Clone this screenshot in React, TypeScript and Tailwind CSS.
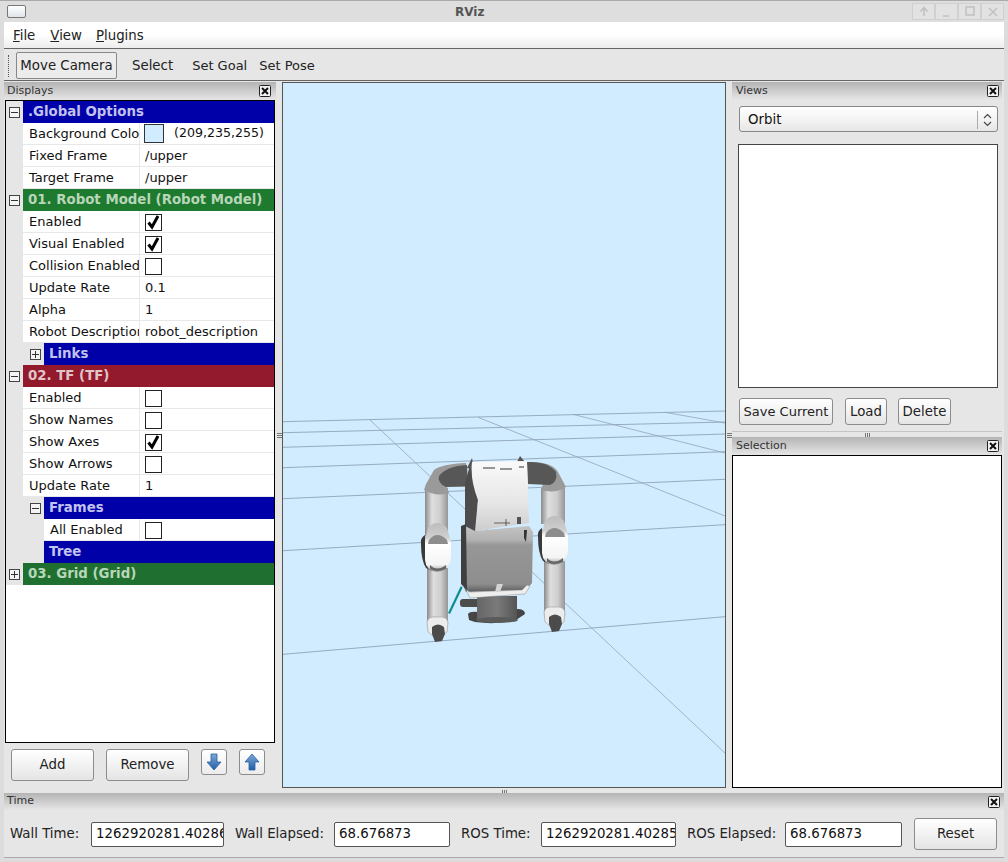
import React from "react";

function Close() {
  return (
    <svg width="12" height="12" viewBox="0 0 12 12" className="shrink-0">
      <rect x="0.5" y="0.5" width="11" height="11" rx="1" fill="#f2f2f2" stroke="#222" />
      <path d="M3 3 L9 9 M9 3 L3 9" stroke="#111" strokeWidth="2" />
    </svg>
  );
}

function Title({ text, className = "" }: { text: string; className?: string }) {
  return (
    <div className={`flex items-center justify-between text-[11px] text-[#333] bg-gradient-to-b from-[#b4b4b4] to-[#e6e6e6] ${className}`}>
      <span>{text}</span>
      <Close />
    </div>
  );
}

function Expander({ plus }: { plus?: boolean }) {
  return (
    <svg width="11" height="11" viewBox="0 0 11 11" className="shrink-0">
      <rect x="0.5" y="0.5" width="10" height="10" fill="#f4f4f4" stroke="#444" />
      <path d={plus ? "M2 5.5 H9 M5.5 2 V9" : "M2 5.5 H9"} stroke="#333" />
    </svg>
  );
}

function Check({ on }: { on?: boolean }) {
  return (
    <svg width="17" height="17" viewBox="0 0 17 17" className="ml-[5px] mt-[2px] shrink-0">
      <rect x="0.5" y="0.5" width="16" height="16" fill="#fff" stroke="#222" />
      {on && <path d="M3.5 8.5 L7 13 L13 2" fill="none" stroke="#000" strokeWidth="3" />}
    </svg>
  );
}

function Header({ text, bg, color, exp, level = 1 }: { text: string; bg: string; color: string; exp?: "plus" | "minus"; level?: number }) {
  return (
    <div className="flex h-[22px] bg-white">
      <div className={`flex items-center justify-end bg-[#e6e6e6] ${level === 1 ? "w-[17px] pr-[3px]" : "w-[38px] pr-[3px]"}`}>
        {exp && <Expander plus={exp === "plus"} />}
      </div>
      <div className={`flex flex-1 items-center whitespace-nowrap pl-[5px] text-[13.33px] font-bold ${bg} ${color}`}>{text}</div>
    </div>
  );
}

function Row({ label, value, check, level = 1, swatch }: { label: string; value?: string; check?: "on" | "off"; level?: number; swatch?: boolean }) {
  return (
    <div className="flex h-[22px]">
      <div className={`bg-[#e6e6e6] ${level === 1 ? "w-[17px]" : "w-[38px]"}`} />
      <div className={`flex h-[22px] items-center overflow-hidden whitespace-nowrap border-b border-r border-[#e8e8e8] bg-white pl-[6px] text-[13px] text-[#111] ${level === 1 ? "w-[117px]" : "w-[96px]"}`}>
        {label}
      </div>
      <div className="flex h-[22px] flex-1 items-center border-b border-[#e8e8e8] bg-white text-[13px] text-[#111]">
        {check && <Check on={check === "on"} />}
        {swatch && <div className="ml-[4px] mr-[10px] h-[19px] w-[20px] border border-[#333] bg-[#d1ebff]" />}
        {value && <span className={swatch ? "text-[12.6px]" : "pl-[5px]"}>{value}</span>}
      </div>
    </div>
  );
}

function Btn({ text, className = "" }: { text: string; className?: string }) {
  return (
    <div className={`flex shrink-0 items-center justify-center whitespace-nowrap rounded-[3px] border border-[#8c8c8c] bg-gradient-to-b from-white via-[#f2f2f2] to-[#e4e4e4] text-[13.33px] text-[#222] ${className}`}>
      {text}
    </div>
  );
}

function ArrowBtn({ up }: { up?: boolean }) {
  return (
    <div className="flex h-[26px] w-[26px] items-center justify-center rounded-[3px] border border-[#8c8c8c] bg-gradient-to-b from-white to-[#ececec]">
      <svg width="16" height="18" viewBox="0 0 16 18">
        <defs>
          <linearGradient id={up ? "au" : "ad"} x1="0" y1="0" x2="0" y2="1">
            <stop offset="0" stopColor="#7fa8d8" />
            <stop offset="1" stopColor="#1f5fa8" />
          </linearGradient>
        </defs>
        <path
          d={up ? "M8 1 L15 9 L11 9 L11 17 L5 17 L5 9 L1 9 Z" : "M8 17 L15 9 L11 9 L11 1 L5 1 L5 9 L1 9 Z"}
          fill={`url(#${up ? "au" : "ad"})`}
          stroke="#2c5f9e"
          strokeWidth="0.8"
        />
      </svg>
    </div>
  );
}

function Field({ value, className = "" }: { value: string; className?: string }) {
  return (
    <div className={`flex h-[25px] shrink-0 items-center overflow-hidden whitespace-nowrap rounded-[2px] border border-[#555] bg-white pl-[4px] text-[13.33px] text-[#111] ${className}`}>
      {value}
    </div>
  );
}

function Scene() {
  const horizontals = [
    [283, 421.7, 725, 411],
    [283, 432.7, 725, 422],
    [283, 447.3, 725, 434],
    [283, 467.7, 725, 451.7],
    [283, 498.7, 725, 479.3],
    [283, 550.7, 725, 524.7],
    [283, 654.3, 725, 616.7],
  ];
  const diagonals = [
    [370, 420, 725, 753],
    [478, 417.3, 725, 516],
    [573, 414.3, 725, 453],
    [665, 412.3, 725, 423],
  ];
  const lower = (dx: number, dy: number, gy: number, k: string) => (
    <g key={k}>
      <g transform={`translate(${dx} ${dy})`}>
        <rect x="427" y="568" width="21" height="54" fill="url(#cyl)" />
        <path d="M421 544 Q420 538 425 535 L428 562 L432 571 L426 568 Q421 560 421 544 Z" fill="#3a3a3a" />
        <path d="M425 540 L428 528 Q437 518 447 528 L451 542 L451 558 Q449 571 437 572 Q426 571 425 560 Z" fill="url(#elbow)" />
        <path d="M429 540 Q437 530 447 540 L448 544 L428 544 Z" fill="#8d8d8d" />
        <path d="M430 565 Q437 572 446 565 L446 569 Q437 573 430 569 Z" fill="#666" />
      </g>
      <g transform={`translate(${dx} ${gy})`}>
        <path d="M427 622 Q428 616 437 617 Q447 616 448 622 L447 632 L442 636 L433 636 L428 632 Z" fill="#ececec" stroke="#888" strokeWidth="0.5" />
        <path d="M432 627 Q438 622 444 627 L445 634 L442 641 L435 642 L432 634 Z" fill="#4b4b4b" />
      </g>
    </g>
  );
  return (
    <svg className="h-full w-full" viewBox="283 83 442 704">
      <defs>
        <linearGradient id="cyl" x1="0" y1="0" x2="1" y2="0">
          <stop offset="0" stopColor="#8a8a8a" />
          <stop offset="0.3" stopColor="#dedede" />
          <stop offset="0.65" stopColor="#cfcfcf" />
          <stop offset="1" stopColor="#969696" />
        </linearGradient>
        <linearGradient id="elbow" x1="0" y1="0" x2="0" y2="1">
          <stop offset="0" stopColor="#bdbdbd" />
          <stop offset="0.3" stopColor="#cfcfcf" />
          <stop offset="0.42" stopColor="#ffffff" />
          <stop offset="0.85" stopColor="#f4f4f4" />
          <stop offset="1" stopColor="#999" />
        </linearGradient>
        <linearGradient id="torso" x1="0" y1="0" x2="0" y2="1">
          <stop offset="0" stopColor="#fafafa" />
          <stop offset="0.6" stopColor="#e6e6e6" />
          <stop offset="1" stopColor="#cdcdcd" />
        </linearGradient>
        <linearGradient id="body" x1="0" y1="0" x2="0" y2="1">
          <stop offset="0" stopColor="#c4c4c4" />
          <stop offset="0.22" stopColor="#b2b2b2" />
          <stop offset="0.3" stopColor="#979797" />
          <stop offset="0.88" stopColor="#8e8e8e" />
          <stop offset="1" stopColor="#5c5c5c" />
        </linearGradient>
        <linearGradient id="base" x1="0" y1="0" x2="1" y2="0">
          <stop offset="0" stopColor="#666" />
          <stop offset="0.5" stopColor="#7a7a7a" />
          <stop offset="1" stopColor="#555" />
        </linearGradient>
      </defs>
      <rect x="283" y="83" width="442" height="704" fill="#d1ebff" />
      {horizontals.map((l, i) => (
        <line key={i} x1={l[0]} y1={l[1]} x2={l[2]} y2={l[3]} stroke="#8fa4bc" strokeWidth="0.9" />
      ))}
      {diagonals.map((l, i) => (
        <line key={i} x1={l[0]} y1={l[1]} x2={l[2]} y2={l[3]} stroke="#93a6b8" strokeWidth="0.8" />
      ))}
      <line x1="461.7" y1="586.7" x2="449" y2="613.5" stroke="#0e8d8d" strokeWidth="2.2" />
      {/* base */}
      <rect x="460" y="599" width="20" height="8" rx="3" fill="#4c4c4c" />
      <path d="M468 614 Q470 611 478 612 L517 609 Q525 609 525 614 L516 620 Q497 625 475 622 L469 620 Z" fill="#454545" />
      <rect x="477" y="596" width="40" height="24" fill="url(#base)" />
      <ellipse cx="497" cy="620" rx="21" ry="3" fill="#5a5a5a" />
      {/* upper arms */}
      <rect x="425" y="488" width="23" height="48" fill="url(#cyl)" />
      <rect x="541" y="488" width="24" height="36" fill="url(#cyl)" />
      {/* lower arms */}
      {lower(0, 0, 0, "l")}
      {lower(117, -7, -10, "r")}
      {/* shoulders */}
      <path d="M424 490 L426 484 L434 470 Q442 464 466 463 L468 487 L447 487 L449 493 Q436 497 424 490 Z" fill="#9a9a9a" />
      <path d="M439 476 Q447 466 467 465 L468 486 L446 487 Q437 483 439 476 Z" fill="#575757" />
      <path d="M527 462 Q552 461 558 472 L566 487 Q556 494 541 490 L543 484 L528 483 Z" fill="#9a9a9a" />
      <path d="M527 462 Q548 461 556 472 Q558 482 550 485 L528 484 Z" fill="#575757" />
      {/* torso side */}
      <path d="M465 483 L471 462 L478 500 L476 532 L465 528 Z" fill="#4c4c4c" />
      <path d="M467 468 L472 458 L474 470 Z" fill="#555" />
      <path d="M517 462 L520 456 L525 462 Z" fill="#555" />
      {/* torso */}
      <path d="M472 462 L527 461 L529 523 L475 531 L478 500 Q470 480 472 462 Z" fill="url(#torso)" />
      <path d="M483 468 H495 M500 469 H512 M519 467 H524" stroke="#333" strokeWidth="1" />
      <path d="M494 523 H510 M506 519 V526" stroke="#444" strokeWidth="0.8" />
      <rect x="517" y="517" width="4" height="7" fill="#555" />
      {/* body */}
      <path d="M463 525 L475 531 L529 526 L533 532 L532 583 L526 590 L466 592 L462 583 Z" fill="url(#body)" />
      <path d="M461 526 L466 524 L467 590 L461 584 Z" fill="#3f3f3f" />
      <path d="M524 530 L527 530 L526 542 L524 538 Z" fill="#333" />
      {/* shelf */}
      <path d="M466 590 L470 598 L525 594 L530 586 L527 585 L522 590 L470 592 Z" fill="#eeeeee" stroke="#888" strokeWidth="0.5" />
      <path d="M497 584 L503 584 L500 592 L495 592 Z" fill="#d4d4d4" />
    </svg>
  );
}

export default function App() {
  return (
    <div className="flex h-[862px] w-[1008px] flex-col overflow-hidden bg-[#e6e6e6] font-['DejaVu_Sans',sans-serif]">
      {/* window title */}
      <div className="flex h-[22px] shrink-0 items-center border-t border-[#aaa] bg-[#dedede] pl-[7px] pr-[4px]">
        <div className="h-[13px] w-[19px] rounded-[2px] border border-[#777] bg-gradient-to-b from-white to-[#dfe3ea]" />
        <span className="ml-[429px] text-[12px] font-bold text-[#555]">RViz</span>
        <div className="ml-auto flex">
          {["M11 14 V6 M7.5 9.5 L11 5.5 L14.5 9.5", "M7 14 H13", "M7 5 H15 V13 H7 Z", "M7 6 L15 14 M15 6 L7 14"].map((d, i) => (
            <div key={i} className="h-[17px] w-[23px] border border-[#d0d0d0] bg-[#e2e2e2]">
              <svg width="21" height="15" viewBox="0 2 21 15">
                <path d={d} fill="none" stroke="#c0c0c0" strokeWidth="1.5" />
              </svg>
            </div>
          ))}
        </div>
      </div>

      <div className="flex min-h-0 flex-1 flex-col border-l-[4px] border-r-[4px] border-b-[4px] border-[#dcdcdc]">
        {/* menu */}
        <div className="flex h-[26px] shrink-0 items-center bg-gradient-to-b from-white via-white to-[#ececec] pl-[9px] pt-[1px] text-[13.33px] text-[#222]">
          <span><u>F</u>ile</span>
          <span className="ml-[15px]"><u>V</u>iew</span>
          <span className="ml-[14px]"><u>P</u>lugins</span>
        </div>
        {/* toolbar */}
        <div className="flex h-[33px] shrink-0 items-center border-y border-[#666] bg-[#e6e6e6] pl-[4px] pt-[2px] text-[13.33px] text-[#222]">
          <div className="h-[22px] w-[2px] border-l border-dotted border-[#555]" />
          <div className="ml-[6px] flex h-[27px] w-[101px] items-center justify-center rounded-[2px] border border-[#888] bg-[#ececec]">Move Camera</div>
          <span className="ml-[15px]">Select</span>
          <span className="ml-[19px] text-[13px]">Set Goal</span>
          <span className="ml-[12px] text-[13px]">Set Pose</span>
        </div>

        {/* main */}
        <div className="flex h-[708px] shrink-0">
          {/* displays */}
          <div className="flex w-[272px] shrink-0 flex-col">
            <Title text="Displays" className="mt-[1px] h-[18px] shrink-0 pl-[3px] pr-[5px]" />
            <div className="ml-[1px] flex h-[643px] w-[270px] shrink-0 flex-col border border-black bg-white">
              <Header text=".Global Options" bg="bg-[#0000a8]" color="text-[#c2c2ee]" exp="minus" />
              <Row label="Background Color" value="(209,235,255)" swatch />
              <Row label="Fixed Frame" value="/upper" />
              <Row label="Target Frame" value="/upper" />
              <Header text="01. Robot Model (Robot Model)" bg="bg-[#1d7a2f]" color="text-[#b8d6b8]" exp="minus" />
              <Row label="Enabled" check="on" />
              <Row label="Visual Enabled" check="on" />
              <Row label="Collision Enabled" check="off" />
              <Row label="Update Rate" value="0.1" />
              <Row label="Alpha" value="1" />
              <Row label="Robot Description" value="robot_description" />
              <Header text="Links" bg="bg-[#0000a8]" color="text-[#c2c2ee]" exp="plus" level={2} />
              <Header text="02. TF (TF)" bg="bg-[#93192c]" color="text-[#e0c4c8]" exp="minus" />
              <Row label="Enabled" check="off" />
              <Row label="Show Names" check="off" />
              <Row label="Show Axes" check="on" />
              <Row label="Show Arrows" check="off" />
              <Row label="Update Rate" value="1" />
              <Header text="Frames" bg="bg-[#0000a8]" color="text-[#c2c2ee]" exp="minus" level={2} />
              <Row label="All Enabled" check="off" level={2} />
              <Header text="Tree" bg="bg-[#0000a8]" color="text-[#c2c2ee]" level={2} />
              <Header text="03. Grid (Grid)" bg="bg-[#1f6f30]" color="text-[#b8d6b8]" exp="plus" />
            </div>
            <div className="flex flex-1 items-start pl-[7px] pt-[6px]">
              <Btn text="Add" className="h-[32px] w-[83px]" />
              <Btn text="Remove" className="ml-[12px] h-[32px] w-[83px]" />
              <div className="ml-[12px]"><ArrowBtn /></div>
              <div className="ml-[12px]"><ArrowBtn up /></div>
            </div>
          </div>

          {/* splitter */}
          <div className="flex w-[6px] shrink-0 flex-col items-center justify-center gap-[1px]">
            <div className="h-px w-[5px] bg-[#777]" />
            <div className="h-px w-[5px] bg-[#777]" />
            <div className="h-px w-[5px] bg-[#777]" />
          </div>

          {/* viewport */}
          <div className="mb-[1px] mt-[1px] w-[444px] shrink-0 border border-[#555]">
            <Scene />
          </div>

          {/* splitter */}
          <div className="flex w-[6px] shrink-0 flex-col items-center justify-center gap-[1px]">
            <div className="h-px w-[5px] bg-[#777]" />
            <div className="h-px w-[5px] bg-[#777]" />
            <div className="h-px w-[5px] bg-[#777]" />
          </div>

          {/* right column */}
          <div className="flex w-[270px] shrink-0 flex-col">
            <div className="flex h-[351px] shrink-0 flex-col border-b border-[#c4c4c4]">
              <Title text="Views" className="mt-[1px] h-[18px] shrink-0 pl-[4px] pr-[3px]" />
              <div className="ml-[7px] mt-[6px] flex h-[26px] w-[259px] items-center justify-between rounded-[3px] border border-[#888] bg-gradient-to-b from-white via-[#f4f4f4] to-[#e6e6e6] pl-[8px] pt-[1px] text-[13.33px] text-[#111]">
                <span>Orbit</span>
                <div className="flex h-[18px] w-[20px] items-center justify-center border-l border-[#aaa]">
                  <svg width="9" height="14" viewBox="0 0 9 14">
                    <path d="M1 5 L4.5 1.5 L8 5 M1 9 L4.5 12.5 L8 9" fill="none" stroke="#444" strokeWidth="1.1" />
                  </svg>
                </div>
              </div>
              <div className="ml-[6px] mt-[12px] h-[244px] w-[260px] border border-[#444] bg-white" />
              <div className="ml-[7px] mt-[10px] flex">
                <Btn text="Save Current" className="h-[27px] w-[94px] text-[13px]" />
                <Btn text="Load" className="ml-[12px] h-[27px] w-[42px]" />
                <Btn text="Delete" className="ml-[11px] h-[27px] w-[53px]" />
              </div>
            </div>
            <div className="flex h-[5px] shrink-0 items-center justify-center gap-[1px]">
              <div className="h-[4px] w-px bg-[#777]" />
              <div className="h-[4px] w-px bg-[#777]" />
              <div className="h-[4px] w-px bg-[#777]" />
            </div>
            <Title text="Selection" className="h-[18px] shrink-0 pl-[4px] pr-[3px]" />
            <div className="mb-[1px] flex-1 border border-black bg-white" />
          </div>
        </div>

        {/* time */}
        <div className="flex min-h-0 flex-1 flex-col border-b border-[#aaa]">
          <div className="flex h-[4px] shrink-0 items-center justify-center gap-[1px] bg-[#e6e6e6]">
            <div className="h-[3px] w-px bg-[#777]" />
            <div className="h-[3px] w-px bg-[#777]" />
            <div className="h-[3px] w-px bg-[#777]" />
          </div>
          <Title text="Time" className="h-[17px] shrink-0 pl-[3px] pr-[4px]" />
          <div className="flex items-center whitespace-nowrap pl-[6px] pt-[8px] text-[13.33px] text-[#222]">
            <span className="w-[69px] shrink-0">Wall Time:</span>
            <Field value="1262920281.402867" className="ml-[12px] w-[133px]" />
            <span className="ml-[11px] w-[87px] shrink-0">Wall Elapsed:</span>
            <Field value="68.676873" className="ml-[12px] w-[116px]" />
            <span className="ml-[11px] w-[68px] shrink-0">ROS Time:</span>
            <Field value="1262920281.402857" className="ml-[12px] w-[135px]" />
            <span className="ml-[11px] w-[86px] shrink-0">ROS Elapsed:</span>
            <Field value="68.676873" className="ml-[12px] w-[117px]" />
            <Btn text="Reset" className="ml-[12px] h-[32px] w-[83px]" />
          </div>
        </div>
      </div>
    </div>
  );
}
